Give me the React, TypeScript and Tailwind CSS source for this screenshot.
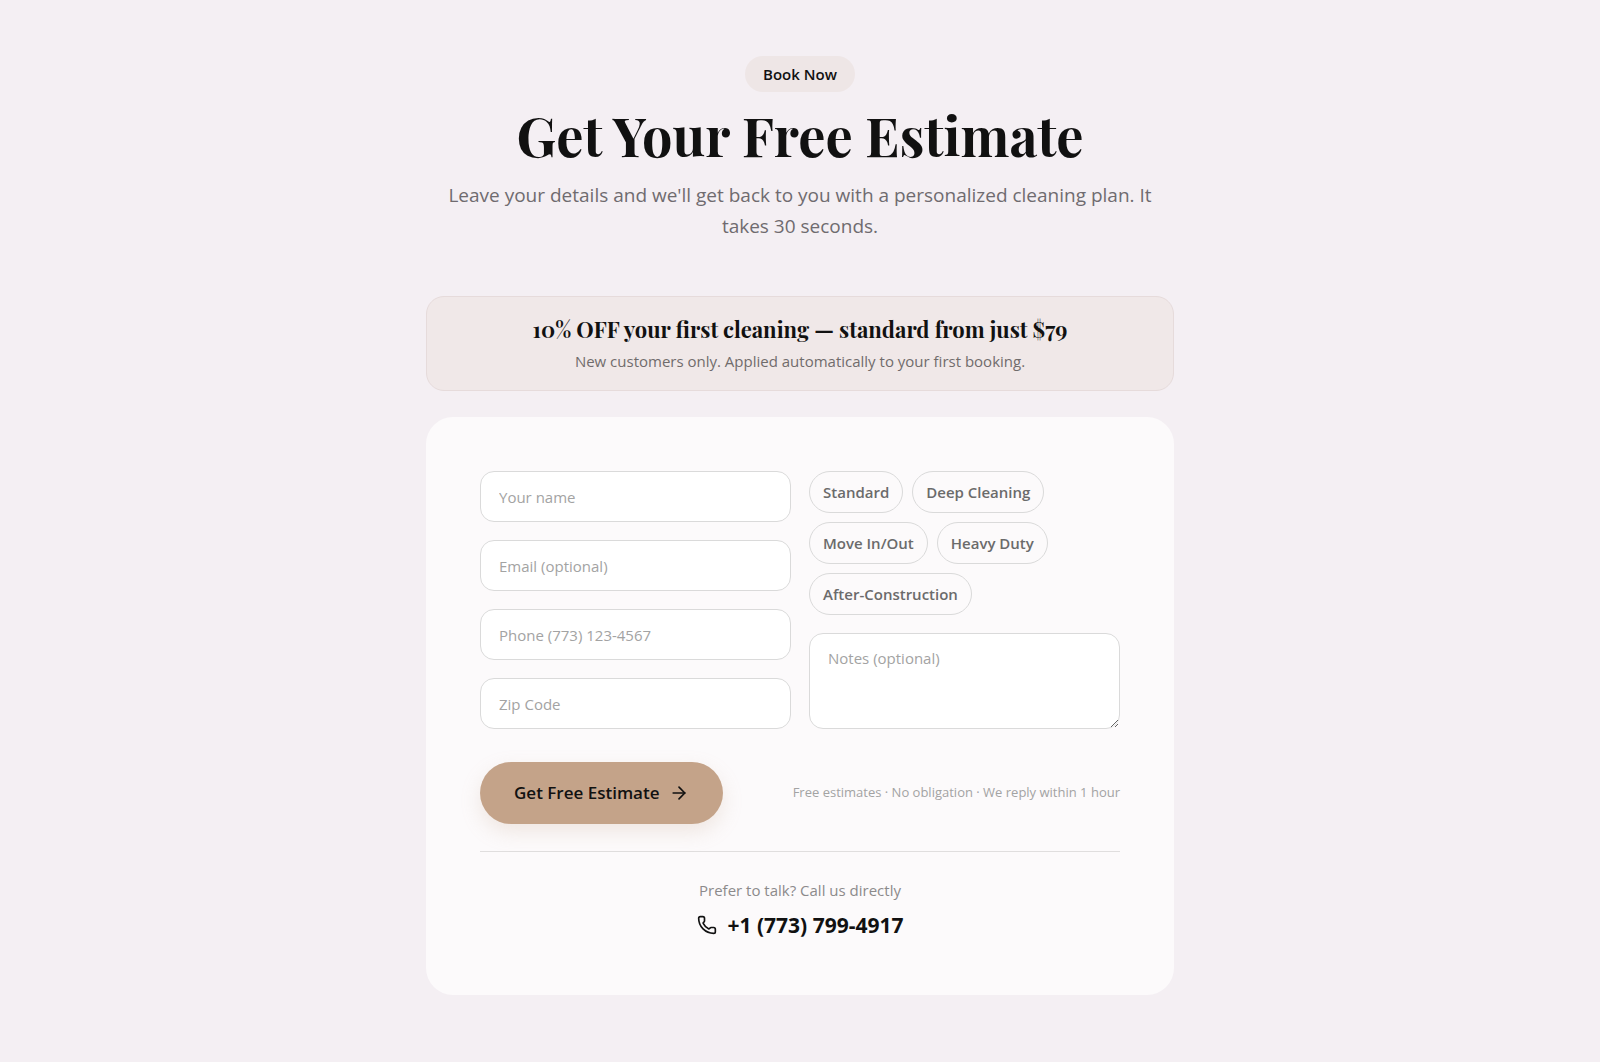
import { useState } from 'react';
import { ArrowRight, Phone } from 'lucide-react';

const fields = [
  { id: 'name', type: 'text', label: 'Your name' },
  { id: 'email', type: 'email', label: 'Email (optional)' },
  { id: 'phone', type: 'tel', label: 'Phone (773) 123-4567' },
  { id: 'zip', type: 'text', label: 'Zip Code' },
];

const services = ['Standard', 'Deep Cleaning', 'Move In/Out', 'Heavy Duty', 'After-Construction'];

const inputClass =
  'block w-full rounded-[14px] border border-[#dadada] bg-white px-[18px] text-[15px] text-[#111] placeholder:text-[#a3a3a3] outline-none focus:border-[#c4a389]';

export default function App() {
  const [selected, setSelected] = useState<string[]>([]);

  const toggle = (service: string) => {
    setSelected((prev) =>
      prev.includes(service) ? prev.filter((s) => s !== service) : [...prev, service]
    );
  };

  return (
    <section className="min-h-screen bg-[#f4eff3] px-6 pt-14 pb-16 font-['Open_Sans','Noto_Sans',sans-serif] text-[#111]">
      <div className="mx-auto w-full max-w-[748px]">

        <header className="text-center">
          <span className="inline-block rounded-full bg-[#eee6e6] px-[18px] py-[6px] text-[15px] leading-6 font-semibold">
            Book Now
          </span>
          <h1 className="mt-3 font-['Playfair_Display','Liberation_Serif',serif] text-[54px] leading-[62px] font-bold">
            Get Your Free Estimate
          </h1>
          <p className="mt-[14px] text-[19px] leading-[31px] text-[#6f6b6f]">
            Leave your details and we'll get back to you with a personalized cleaning plan. It takes 30 seconds.
          </p>
        </header>

        <div className="mt-[54px] rounded-[18px] border border-[#e6dbdb] bg-[#f0e8e8] px-6 py-[17px] text-center">
          <p className="font-['Playfair_Display','Liberation_Serif',serif] text-[22px] leading-[31px] font-bold">
            10% OFF your first cleaning — standard from just $79
          </p>
          <p className="mt-1 text-[15px] leading-6 text-[#706c6c]">
            New customers only. Applied automatically to your first booking.
          </p>
        </div>

        <div className="mt-[26px] rounded-[27px] bg-[#fcfafb] px-[54px] pt-[54px] pb-14">
          <form onSubmit={(e) => e.preventDefault()}>
            <div className="grid gap-[18px] md:grid-cols-2">
              <div className="flex flex-col gap-[18px]">
                {fields.map((field) => (
                  <input
                    key={field.id}
                    id={field.id}
                    type={field.type}
                    aria-label={field.label}
                    placeholder={field.label}
                    className={`${inputClass} h-[51px]`}
                  />
                ))}
              </div>

              <div className="flex flex-col gap-[18px]">
                <div className="flex flex-wrap gap-[9px]">
                  {services.map((service) => (
                    <button
                      key={service}
                      type="button"
                      aria-pressed={selected.includes(service)}
                      onClick={() => toggle(service)}
                      className={`h-[42px] rounded-full border px-[13px] text-[15px] font-semibold transition ${
                        selected.includes(service)
                          ? 'border-[#c4a389] bg-[#c4a389] text-[#111]'
                          : 'border-[#dadada] text-[#6b6b6b]'
                      }`}
                    >
                      {service}
                    </button>
                  ))}
                </div>
                <textarea
                  id="notes"
                  aria-label="Notes (optional)"
                  placeholder="Notes (optional)"
                  className={`${inputClass} grow resize-y py-[13px]`}
                />
              </div>
            </div>

            <div className="mt-[33px] flex flex-wrap items-center justify-between gap-4">
              <button
                type="submit"
                className="flex h-[62px] items-center gap-[9px] rounded-full bg-[#c4a389] px-[34px] text-[17px] font-semibold shadow-[0_8px_20px_rgba(196,163,137,0.22)] transition hover:opacity-90"
              >
                Get Free Estimate
                <ArrowRight className="h-5 w-5" />
              </button>
              <p className="text-[13px] text-[#a3a3a3]">
                Free estimates · No obligation · We reply within 1 hour
              </p>
            </div>
          </form>

          <div className="mt-[27px] flex flex-col items-center border-t border-[#e0dede] pt-[26px]">
            <p className="text-[15px] leading-6 text-[#8c8a8b]">Prefer to talk? Call us directly</p>
            <a href="tel:+17737994917" className="mt-[9px] flex items-center gap-[11px] text-[21px] leading-7 font-bold">
              <Phone className="h-5 w-5" />
              +1 (773) 799-4917
            </a>
          </div>
        </div>

      </div>
    </section>
  );
}
